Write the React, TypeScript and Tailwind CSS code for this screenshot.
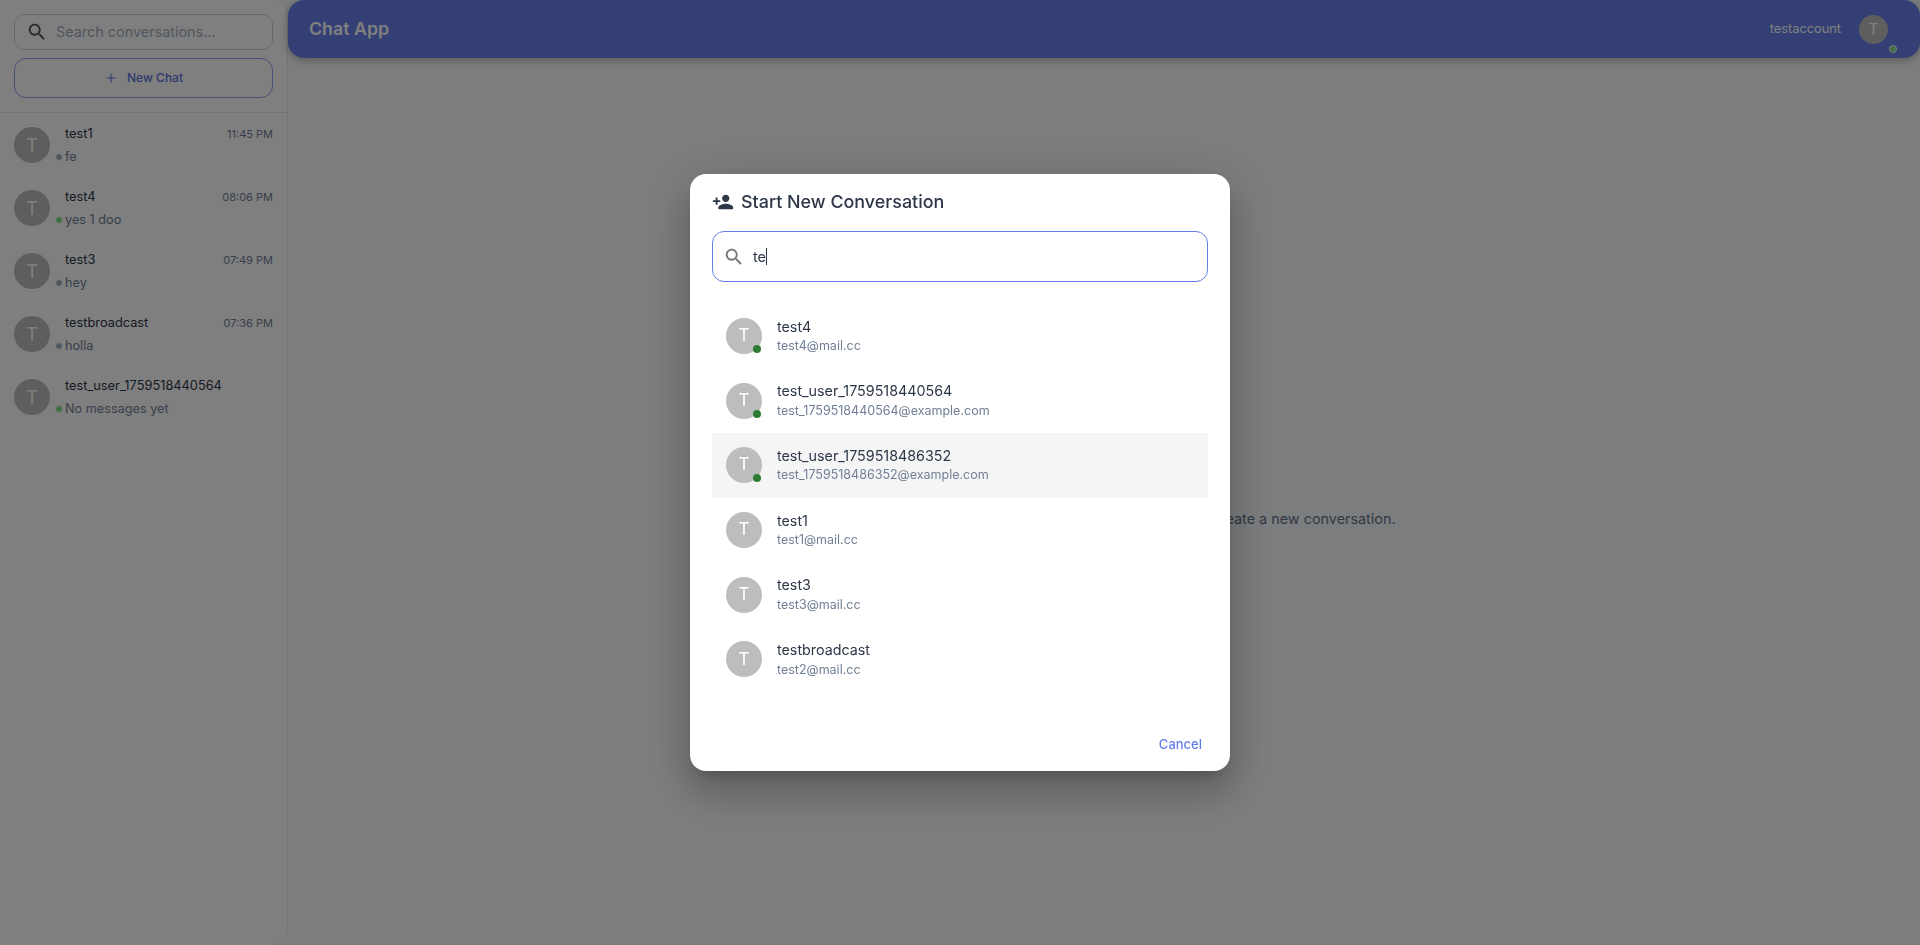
import { Plus } from 'lucide-react';

const font = 'font-["Inter","Liberation_Sans",sans-serif]';

const conversations = [
  { name: 'test1', time: '11:45 PM', preview: 'fe', online: false },
  { name: 'test4', time: '08:06 PM', preview: 'yes 1 doo', online: true },
  { name: 'test3', time: '07:49 PM', preview: 'hey', online: false },
  { name: 'testbroadcast', time: '07:36 PM', preview: 'holla', online: false },
  { name: 'test_user_1759518440564', time: '', preview: 'No messages yet', online: true },
];

const users = [
  { name: 'test4', email: 'test4@mail.cc', online: true },
  { name: 'test_user_1759518440564', email: 'test_1759518440564@example.com', online: true },
  { name: 'test_user_1759518486352', email: 'test_1759518486352@example.com', online: true, hovered: true },
  { name: 'test1', email: 'test1@mail.cc', online: false },
  { name: 'test3', email: 'test3@mail.cc', online: false },
  { name: 'testbroadcast', email: 'test2@mail.cc', online: false },
];

function SearchIcon({ className }: { className: string }) {
  return (
    <svg viewBox="0 0 24 24" fill="currentColor" className={className}>
      <path d="M15.5 14h-.79l-.28-.27C15.41 12.59 16 11.11 16 9.5 16 5.91 13.09 3 9.5 3S3 5.91 3 9.5 5.91 16 9.5 16c1.61 0 3.09-.59 4.23-1.57l.27.28v.79l5 4.99L20.49 19l-4.99-5zm-6 0C7.01 14 5 11.99 5 9.5S7.01 5 9.5 5 14 7.01 14 9.5 11.99 14 9.5 14z" />
    </svg>
  );
}

function PersonAddIcon({ className }: { className: string }) {
  return (
    <svg viewBox="0 0 24 24" fill="currentColor" className={className}>
      <path d="M15 12c2.21 0 4-1.79 4-4s-1.79-4-4-4-4 1.79-4 4 1.79 4 4 4zm-9-2V7H4v3H1v2h3v3h2v-3h3v-2H6zm9 4c-2.67 0-8 1.34-8 4v2h16v-2c0-2.66-5.33-4-8-4z" />
    </svg>
  );
}

function Sidebar() {
  return (
    <aside className="w-[288px] shrink-0 h-full flex flex-col bg-white border-r border-[#e2e8f0] rounded-r-2xl">
      {/* Search + new chat */}
      <div className="px-[14px] pt-[14px] pb-[14px] border-b border-[#e2e8f0] flex flex-col gap-[8px]">
        <div className="h-[36px] flex items-center border border-[#cbd5e1] rounded-[10px] pl-[11px] gap-[8px]">
          <SearchIcon className="w-[22px] h-[22px] text-[#555]" />
          <span className="text-[14.4px] text-[#a0aec0]">Search conversations...</span>
        </div>
        <button
          type="button"
          className="h-[40px] flex items-center justify-center gap-[9px] border border-[#8c9eef] rounded-[12px] text-[#5a6fd8] text-[12px] font-medium"
        >
          <Plus size={14} strokeWidth={1.75} />
          New Chat
        </button>
      </div>

      {/* Conversation list */}
      <div className="flex flex-col pt-[14px]">
        {conversations.map((c) => (
          <div key={c.name} className="h-[63px] flex px-[14px] gap-[15px] relative">
            <div className="w-[36px] h-[36px] rounded-full bg-[#bdbdbd] text-white flex items-center justify-center text-[18px] shrink-0">
              T
            </div>
            <div className="flex-1 min-w-0">
              <div className="flex justify-between items-center h-[14px]">
                <span className="text-[12.8px] text-[#2d3748]">{c.name}</span>
                <span className="text-[11px] text-[#718096]">{c.time}</span>
              </div>
              <div className="text-[12.7px] text-[#718096] mt-[8px] leading-[16px]">{c.preview}</div>
            </div>
            <span
              className={`absolute left-[55px] top-[26px] w-[8px] h-[8px] rounded-full border-[1.5px] border-white ${c.online ? 'bg-[#7fe08a]' : 'bg-[#a0aec0]'}`}
            />
          </div>
        ))}
      </div>
    </aside>
  );
}

function MainArea() {
  return (
    <main className="flex-1 min-w-0 h-full flex flex-col bg-[#f8fafc]">
      <header className="h-[58px] shrink-0 rounded-2xl bg-[#667eea] flex items-center pl-[21px] pr-[32px] shadow-[0_2px_8px_rgba(0,0,0,0.3)]">
        <span className="text-[17.8px] font-semibold text-white">Chat App</span>
        <span className="ml-auto text-[12.8px] text-white">testaccount</span>
        <div className="relative ml-[18px]">
          <div className="w-[29px] h-[29px] rounded-full bg-[#bdbdbd] text-white flex items-center justify-center text-[16px]">
            T
          </div>
          <span className="absolute right-[-9px] bottom-[-9px] w-[8px] h-[8px] rounded-full border-[1.5px] border-white bg-[#7fe08a]" />
        </div>
      </header>
      <div className="flex-1 flex items-center justify-center pt-[34px]">
        <p className="text-[14.4px] text-[#64748b]">
          Select a conversation from the sidebar to start chatting, or create a new conversation.
        </p>
      </div>
    </main>
  );
}

function NewConversationDialog() {
  return (
    <div className="fixed inset-0 bg-black/50 flex items-center justify-center">
      <div className="w-[540px] h-[597px] bg-white rounded-2xl shadow-[0_11px_15px_-7px_rgba(0,0,0,0.2),0_24px_38px_3px_rgba(0,0,0,0.14),0_9px_46px_8px_rgba(0,0,0,0.12)] flex flex-col px-[22px]">
        <div className="flex items-center gap-[7px] pb-[1px] h-[57px]">
          <PersonAddIcon className="w-[22px] h-[22px] text-[#2d3748]" />
          <h2 className="text-[17.92px] font-medium text-[#2d3748]">Start New Conversation</h2>
        </div>
        <div className="h-[51px] border border-[#667eea] rounded-[12px] flex items-center pl-[10px] gap-[8px]">
          <SearchIcon className="w-[22px] h-[22px] text-[#757575]" />
          <div className="flex items-center text-[14.4px] text-[#2d3748]">
            te
            <span className="w-px h-[17px] bg-[#2d3748]" />
          </div>
        </div>
        <div className="flex flex-col mt-[21.5px]">
          {users.map((u) => (
            <div
              key={u.name}
              className={`h-[64.7px] flex items-center px-[14px] gap-[15px] ${u.hovered ? 'bg-[#f5f5f5]' : ''}`}
            >
              <div className="relative shrink-0">
                <div className="w-[36px] h-[36px] rounded-full bg-[#bdbdbd] text-white flex items-center justify-center text-[17px]">
                  T
                </div>
                {u.online && (
                  <span className="absolute right-[1px] bottom-[1px] w-[8px] h-[8px] rounded-full bg-[#2e7d32]" />
                )}
              </div>
              <div>
                <div className="text-[14.3px] leading-[19px] text-[#2d3748]">{u.name}</div>
                <div className="text-[12.5px] leading-[18px] mt-[1.5px] text-[#718096]">{u.email}</div>
              </div>
            </div>
          ))}
        </div>
        <div className="mt-auto flex justify-end pb-[17px]">
          <button type="button" className="text-[13px] font-medium text-[#667eea] pr-[6px]">
            Cancel
          </button>
        </div>
      </div>
    </div>
  );
}

export default function App() {
  return (
    <div className={`${font} h-[945px] w-full flex bg-[#f8fafc] overflow-hidden`}>
      <Sidebar />
      <MainArea />
      <NewConversationDialog />
    </div>
  );
}
